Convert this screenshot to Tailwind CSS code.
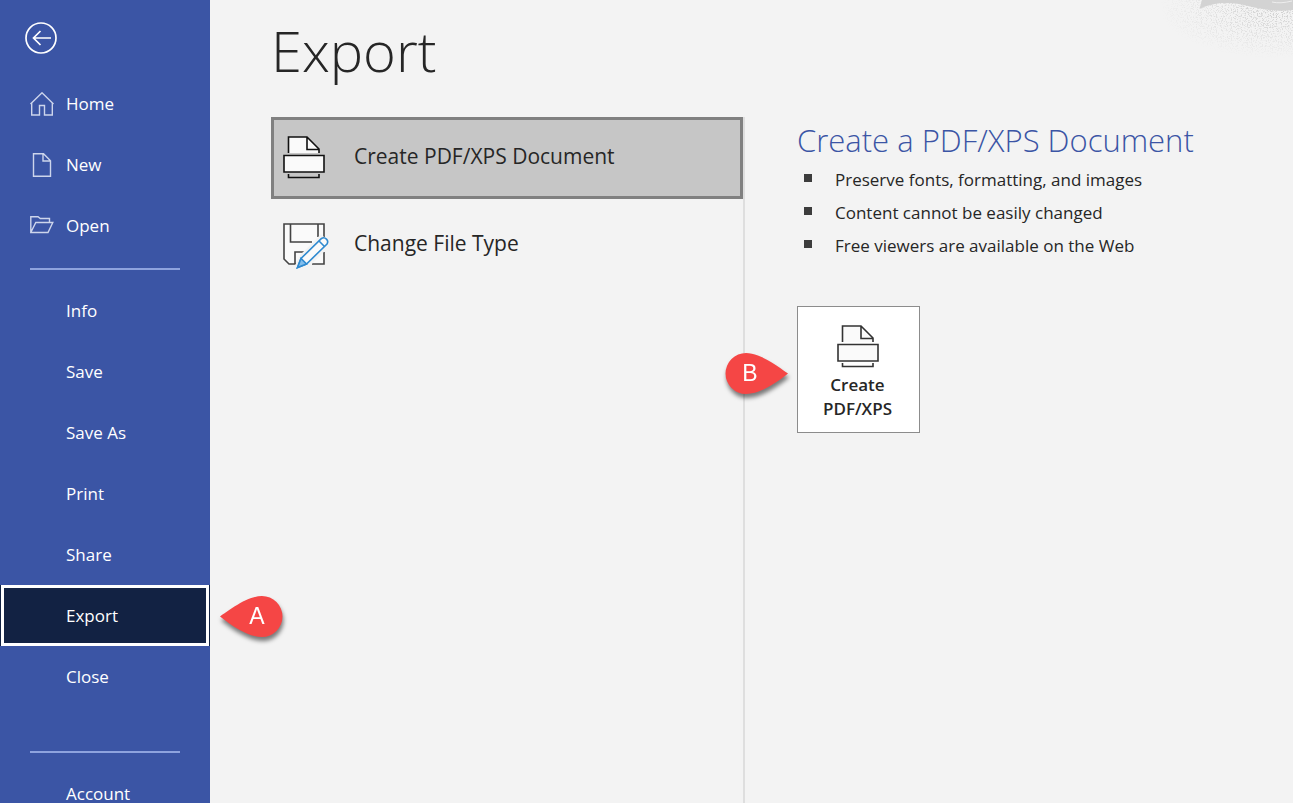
<!DOCTYPE html>
<html lang="en">
<head>
<meta charset="utf-8">
<meta name="viewport" content="width=device-width, initial-scale=1">
<title>Export</title>
<script src="https://cdn.jsdelivr.net/npm/@tailwindcss/browser@4"></script>
</head>
<body class="relative flex h-screen overflow-hidden bg-[#f3f3f3] font-['Open_Sans','Noto_Sans',sans-serif] text-[#262626]">

<svg width="0" height="0" class="absolute" aria-hidden="true">
  <symbol id="pdf" viewBox="0 0 42 43">
    <path d="M6 17V1h18l12 12v4z" fill="#fafafa"/>
    <path d="M5.500 17V1H24L36 13V17M24 1V13.500H36M5.500 38V41.500H36V38" fill="none" stroke="currentColor" stroke-width="1.600"/>
    <path d="M1 19.500H41V36H1Z" fill="#fafafa" stroke="currentColor" stroke-width="1.600"/>
  </symbol>
</svg>

<nav aria-label="File" class="relative z-10 w-[210px] shrink-0 bg-[#3b55a5] text-[17px] text-white">
  <div class="flex h-[73px] items-start pt-[22px] pl-[25px]">
    <button type="button" aria-label="Back" class="size-8">
      <svg viewBox="0 0 32 32" class="size-8" fill="none" stroke="currentColor" stroke-width="1.700"><circle cx="16" cy="16" r="15"/><path d="M26 16H8.500M15.500 9L8.500 16L15.500 23"/></svg>
    </button>
  </div>
  <a href="#home" class="flex h-[61px] items-center gap-3 pl-[30px]">
    <svg viewBox="0 0 24 24" class="size-6" fill="none" stroke="#cdd5ec" stroke-width="1.400"><path d="M.5 12L12 .8L23.500 12M1.700 11V23H9.500V13.500H14.500V23H22.300V11"/></svg>Home</a>
  <a href="#new" class="flex h-[61px] items-center gap-3 pl-[30px]">
    <svg viewBox="0 0 24 24" class="size-6" fill="none" stroke="#cdd5ec" stroke-width="1.400"><path d="M3.500 .7H13.500L20.500 7.700V23.300H3.500ZM13 .7V8H20.500"/></svg>New</a>
  <a href="#open" class="flex h-[61px] items-center gap-3 pl-[30px]">
    <svg viewBox="0 0 24 24" class="size-6" fill="none" stroke="#cdd5ec" stroke-width="1.400"><path d="M.8 18.500V2.700H8L10.300 4.500H19.500V8.500M.8 18.500L5.800 8.500H22.800L18 18.500Z"/></svg>Open</a>
  <hr class="mx-[30px] mt-3 mb-[10px] border-t-2 border-[#8ea3de]">
  <a href="#info" class="flex h-[61px] items-center pl-[66px]">Info</a>
  <a href="#save" class="flex h-[61px] items-center pl-[66px]">Save</a>
  <a href="#save-as" class="flex h-[61px] items-center pl-[66px]">Save As</a>
  <a href="#print" class="flex h-[61px] items-center pl-[66px]">Print</a>
  <a href="#share" class="flex h-[61px] items-center pl-[66px]">Share</a>
  <a href="#export" aria-current="page" class="relative flex h-[61px] items-center bg-[#122243] pl-[66px] before:absolute before:inset-x-px before:inset-y-0 before:border-3 before:border-white">Export
    <svg viewBox="0 0 62 42" class="absolute top-[11px] left-[220px] h-[42px] w-[62px] overflow-visible drop-shadow-[1px_4px_2px_#00000080]"><path d="M0 20.500C12 12 28 0 42 0A20.500 20.500 0 0 1 42 41C28 41 12 30 0 20.500Z" fill="#f54645"/><text x="37" y="28" text-anchor="middle" font-family="Liberation Sans" font-size="23" fill="#fff">A</text></svg>
  </a>
  <a href="#close" class="flex h-[61px] items-center pl-[66px]">Close</a>
  <hr class="mx-[30px] mt-11 mb-[10px] border-t-2 border-[#8ea3de]">
  <a href="#account" class="flex h-[61px] items-center pl-[66px]">Account</a>
</nav>

<main class="flex min-w-0 flex-1 flex-col pl-[61px]">
  <h1 class="flex h-[117px] items-start pt-[10px] text-[56px] leading-[80px] font-light">Export</h1>
  <div class="flex flex-1">
    <section aria-label="Export options" class="flex w-[474px] shrink-0 flex-col gap-[5px] border-r-2 border-[#dedede] text-[21px]">
      <button type="button" aria-pressed="true" class="flex h-[82px] items-center gap-[29px] border-3 border-[#808080] bg-[#c6c6c6] pb-0.5 pl-[9px] text-left">
        <svg class="h-[43px] w-[42px] text-[#111]"><use href="#pdf"/></svg>
        <span>Create PDF/XPS Document</span>
      </button>
      <button type="button" class="flex h-[82px] items-center gap-[25px] pb-0.5 pl-3 text-left">
        <svg viewBox="0 0 46 46" class="mt-1 h-[46px] w-[46px]" fill="none" stroke="#444" stroke-width="1.600">
          <path d="M1 1H41V41H6L1 36Z" fill="#fafafa" stroke="none"/>
          <path d="M41 14V1H1V36L6 41H13M7.500 1V19H29M35 1V14M12 41V29H21M29 41H41V29"/>
          <path d="M13 45L19 33L38 14L46 21L26 41Z" fill="#f3f3f3" stroke="#f3f3f3" stroke-width="4"/>
          <path d="M14.500 44.500L18 35.500L38.500 15.500A4 4 0 0 1 44 21L23.500 41Z" fill="#fafafa" stroke="#2f8ad0"/>
          <path d="M14.500 44.500L18 35.500L23.500 41Z" fill="#83beec" stroke="#2f8ad0"/><path d="M36 18L41.500 23.500" stroke="#2f8ad0"/>
        </svg>
        <span>Change File Type</span>
      </button>
    </section>
    <section class="flex min-w-0 flex-1 flex-col items-start pl-[52px]">
      <h2 class="pt-[3px] text-[31px] leading-10 font-light text-[#3b55a5]">Create a PDF/XPS Document</h2>
      <ul class="flex flex-col pt-[3px] text-[17px] leading-[33px]">
        <li class="flex items-center gap-[23px] pl-[7px] before:mb-1 before:size-2 before:bg-[#3c3c3c]">Preserve fonts, formatting, and images</li>
        <li class="flex items-center gap-[23px] pl-[7px] before:mb-1 before:size-2 before:bg-[#3c3c3c]">Content cannot be easily changed</li>
        <li class="flex items-center gap-[23px] pl-[7px] before:mb-1 before:size-2 before:bg-[#3c3c3c]">Free viewers are available on the Web</li>
      </ul>
      <div class="relative mt-11">
        <button type="button" class="flex h-[127px] w-[123px] flex-col items-center border border-[#8c8c8c] bg-white pt-[18px] pr-0.5 text-[17px] leading-6 font-semibold">
          <svg class="mb-[5px] h-[43px] w-[42px] text-[#333]"><use href="#pdf"/></svg>
          Create<br>PDF/XPS
        </button>
        <svg viewBox="0 0 62 42" class="absolute top-[47px] -left-[71px] h-[42px] w-[62px] overflow-visible drop-shadow-[1px_4px_2px_#00000080]"><path d="M62 20.500C50 12 34 0 20 0A20.500 20.500 0 0 0 20 41C34 41 50 30 62 20.500Z" fill="#f54645"/><text x="24" y="28" text-anchor="middle" font-family="Liberation Sans" font-size="23" fill="#fff">B</text></svg>
      </div>
    </section>
  </div>
</main>

<svg viewBox="0 0 143 70" class="pointer-events-none absolute top-0 right-0 h-[70px] w-[143px]" aria-hidden="true">
  <defs>
    <filter id="grain" x="0" y="0" width="1" height="1" color-interpolation-filters="sRGB"><feTurbulence type="fractalNoise" baseFrequency=".8" numOctaves="2" seed="4"/><feColorMatrix values="0 0 0 0 .7  0 0 0 0 .7  0 0 0 0 .7  6 0 0 0 -3"/></filter>
    <radialGradient id="fade" gradientUnits="userSpaceOnUse" cx="0" cy="0" r="1" gradientTransform="translate(125 8) scale(115 50)"><stop offset="0" stop-color="#fff" stop-opacity=".6"/><stop offset="1" stop-color="#fff" stop-opacity="0"/></radialGradient>
    <mask id="soft"><rect width="143" height="70" fill="url(#fade)"/></mask>
  </defs>
  <g mask="url(#soft)"><rect width="143" height="70" filter="url(#grain)"/></g>
  <path d="M52 0L49.500 9C65 1 83 2 98 6C115 10 130 12 143 10V0Z" fill="#d3d3d3"/>
  <path d="M122 2Q130 4 142 1" fill="none" stroke="#eee"/>
</svg>
</body>
</html>
